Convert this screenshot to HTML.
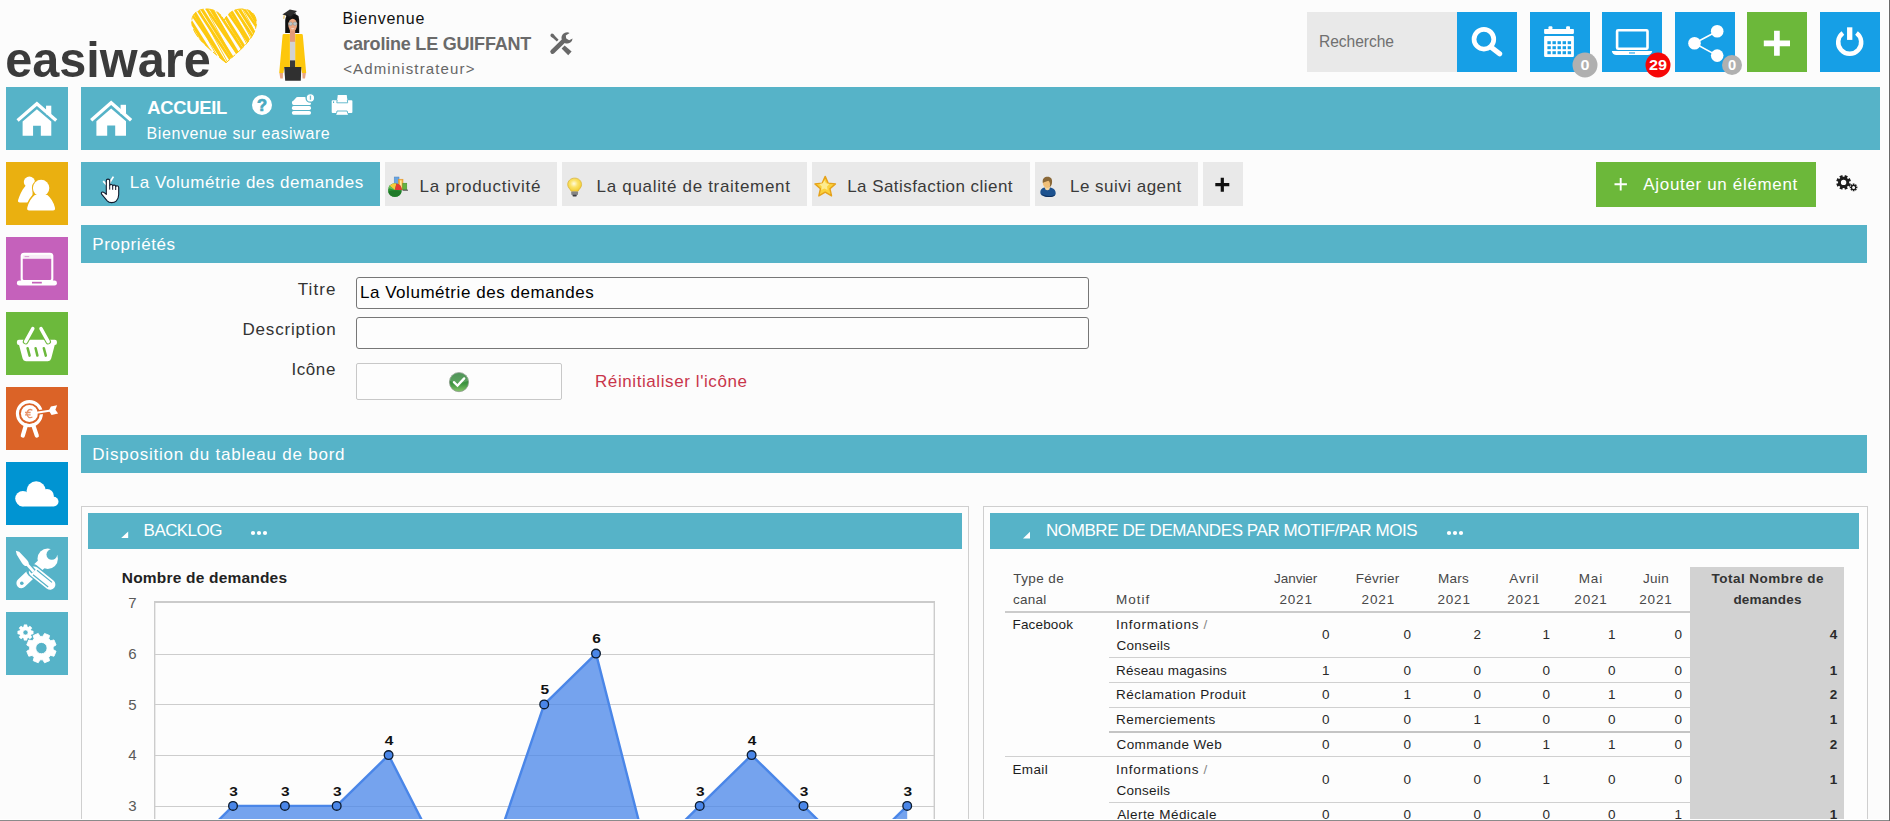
<!DOCTYPE html>
<html lang="fr">
<head>
<meta charset="utf-8">
<title>easiware - Accueil</title>
<style>
*{box-sizing:border-box;margin:0;padding:0}
html,body{width:1890px;height:821px;overflow:hidden;background:#fcfcfc}
body{position:relative;font-family:"Liberation Sans",sans-serif;color:#333;font-size:16px}
.a{position:absolute}
.t{position:absolute;white-space:nowrap;line-height:1}
svg{position:absolute;overflow:visible}
#frame{position:absolute;left:0;top:0;width:1890px;height:821px;pointer-events:none}
#frame i{position:absolute;display:block}

</style>
</head>
<body>
<!-- header -->
<svg class="a" style="left:0px;top:0px" width="330" height="87" viewBox="0 0 330 87" ><text x="5.2" y="76.5" font-family="Liberation Sans, sans-serif" font-weight="bold" font-size="49.6" fill="#3b3b3b" textLength="205.5" lengthAdjust="spacingAndGlyphs">easiware</text></svg>
<svg class="a" style="left:0px;top:0px" width="330" height="87" viewBox="0 0 330 87" ><defs><clipPath id="hc"><path d="M226 62.8 C213 52 195.5 39 192.3 26 C189.4 14 198 8.4 208 9 C216.5 9.6 221.4 14.4 224 20.4 C227.6 13 234 8.6 243 9 C253.4 9.6 258.4 18 255.6 28.4 C252 41.4 238 52 226 62.8 Z"/></clipPath></defs><g clip-path="url(#hc)" stroke="#fdc910" fill="none"><path d="M140.0 0 L184.0 70" stroke-width="3.0"/><path d="M144.6 0 L192.6 70" stroke-width="2.5"/><path d="M149.6 0 L191.6 70" stroke-width="3.3"/><path d="M153.9 0 L199.9 70" stroke-width="2.7"/><path d="M158.7 0 L202.7 70" stroke-width="3.0"/><path d="M163.3 0 L211.3 70" stroke-width="2.5"/><path d="M168.3 0 L210.3 70" stroke-width="3.3"/><path d="M172.6 0 L218.6 70" stroke-width="2.7"/><path d="M177.4 0 L221.4 70" stroke-width="3.0"/><path d="M182.0 0 L230.0 70" stroke-width="2.5"/><path d="M187.0 0 L229.0 70" stroke-width="3.3"/><path d="M191.3 0 L237.3 70" stroke-width="2.7"/><path d="M196.1 0 L240.1 70" stroke-width="3.0"/><path d="M200.7 0 L248.7 70" stroke-width="2.5"/><path d="M205.7 0 L247.7 70" stroke-width="3.3"/><path d="M210.0 0 L256.0 70" stroke-width="2.7"/><path d="M214.8 0 L258.8 70" stroke-width="3.0"/><path d="M219.4 0 L267.4 70" stroke-width="2.5"/><path d="M224.4 0 L266.4 70" stroke-width="3.3"/><path d="M228.7 0 L274.7 70" stroke-width="2.7"/><path d="M233.5 0 L277.5 70" stroke-width="3.0"/><path d="M238.1 0 L286.1 70" stroke-width="2.5"/><path d="M243.1 0 L285.1 70" stroke-width="3.3"/><path d="M247.4 0 L293.4 70" stroke-width="2.7"/><path d="M252.2 0 L296.2 70" stroke-width="3.0"/><path d="M256.8 0 L304.8 70" stroke-width="2.5"/><path d="M261.8 0 L303.8 70" stroke-width="3.3"/><path d="M266.1 0 L312.1 70" stroke-width="2.7"/><path d="M270.9 0 L314.9 70" stroke-width="3.0"/><path d="M275.5 0 L323.5 70" stroke-width="2.5"/><path d="M280.5 0 L322.5 70" stroke-width="3.3"/><path d="M284.8 0 L330.8 70" stroke-width="2.7"/><path d="M289.6 0 L333.6 70" stroke-width="3.0"/><path d="M294.2 0 L342.2 70" stroke-width="2.5"/><path d="M299.2 0 L341.2 70" stroke-width="3.3"/><path d="M150.0 0 L188.0 70" stroke-width="0.9"/><path d="M157.3 0 L195.3 70" stroke-width="0.9"/><path d="M164.6 0 L202.6 70" stroke-width="0.9"/><path d="M171.9 0 L209.9 70" stroke-width="0.9"/><path d="M179.2 0 L217.2 70" stroke-width="0.9"/><path d="M186.5 0 L224.5 70" stroke-width="0.9"/><path d="M193.8 0 L231.8 70" stroke-width="0.9"/><path d="M201.1 0 L239.1 70" stroke-width="0.9"/><path d="M208.4 0 L246.4 70" stroke-width="0.9"/><path d="M215.7 0 L253.7 70" stroke-width="0.9"/><path d="M223.0 0 L261.0 70" stroke-width="0.9"/><path d="M230.3 0 L268.3 70" stroke-width="0.9"/><path d="M237.6 0 L275.6 70" stroke-width="0.9"/><path d="M244.9 0 L282.9 70" stroke-width="0.9"/><path d="M252.2 0 L290.2 70" stroke-width="0.9"/><path d="M259.5 0 L297.5 70" stroke-width="0.9"/><path d="M266.8 0 L304.8 70" stroke-width="0.9"/><path d="M274.1 0 L312.1 70" stroke-width="0.9"/><path d="M281.4 0 L319.4 70" stroke-width="0.9"/><path d="M288.7 0 L326.7 70" stroke-width="0.9"/><path d="M296.0 0 L334.0 70" stroke-width="0.9"/></g><path d="M226 62.8 C213 52 195.5 39 192.3 26 C189.4 14 198 8.4 208 9 C216.5 9.6 221.4 14.4 224 20.4 C227.6 13 234 8.6 243 9 C253.4 9.6 258.4 18 255.6 28.4 C252 41.4 238 52 226 62.8 Z" fill="none" stroke="#fdc910" stroke-width="1.0" stroke-dasharray="9 3 5 2"/></svg>
<svg class="a" style="left:0px;top:0px" width="330" height="87" viewBox="0 0 330 87" ><path d="M285.2 33 V21 C285.2 15.4 288.6 13.6 292.3 13.6 C296 13.6 299.2 15.6 299.2 21 V33 Z" fill="#121212"/><rect x="289.9" y="29" width="5.3" height="13" fill="#e39a78"/><ellipse cx="292.7" cy="25" rx="4.4" ry="6.2" fill="#eaa581"/><path d="M287.6 22 C288.4 17.4 292 16.4 294.6 17.2 C296.4 17.8 297.6 19.4 297.8 21.6 L298.6 16 L292 13.6 L286.4 16.4 Z" fill="#121212"/><ellipse cx="290.5" cy="23.7" rx="2" ry="1.7" fill="#b9c6c8" stroke="#8a8f8c" stroke-width=".5"/><ellipse cx="295" cy="23.7" rx="2" ry="1.7" fill="#b9c6c8" stroke="#8a8f8c" stroke-width=".5"/><path d="M290.8 28.4 Q292.7 30 294.6 28.4 Z" fill="#fff"/><path d="M282.4 14.4 L289.8 9.4 L297 11 L290.7 16.8 Z" fill="#2c2c2c"/><path d="M285.8 15.4 L290.7 18.4 L295.6 14 L295.6 12.4 L290.7 16.8 L285.8 14.2 Z" fill="#1a1a1a"/><path d="M284.2 15.2 L283.8 18.8" stroke="#e2b13a" stroke-width="1" fill="none"/><rect x="289.9" y="41.8" width="5.3" height="19" fill="#d2d2d2"/><rect x="289.9" y="60.4" width="5.5" height="8" fill="#3a3a3a"/><path d="M282.6 35 Q282.6 34 284 34 L289.9 34 L289.9 67 L284.4 67 L283.4 73 L279.2 73 Z" fill="#fdc70c"/><path d="M302.8 35 Q302.8 34 301.4 34 L295.2 34 L295.2 67 L301 67 L302 73 L306.2 73 Z" fill="#fdc70c"/><path d="M279.4 73 H283 L282.8 78.5 H280.3 Z" fill="#eaa581"/><path d="M302.3 73 H305.9 L305 78.5 H302.6 Z" fill="#eaa581"/><path d="M284.2 67 H301.3 L300.8 80.8 H285.2 Z" fill="#303030"/></svg>
<div class="t" style="top:11px;font-size:16px;color:#111;letter-spacing:0.763px;left:342.59px;">Bienvenue</div>
<div class="t" style="top:35px;font-size:18px;color:#6a6a6a;font-weight:bold;letter-spacing:-0.207px;left:343.2px;">caroline LE GUIFFANT</div>
<div class="t" style="top:61px;font-size:15px;color:#666;letter-spacing:1.137px;left:343.16px;">&lt;Administrateur&gt;</div>
<svg class="a" style="left:543px;top:26px" width="36" height="36" viewBox="0 0 36 36" ><path d="M9.6 25.6 L21.4 14.2" stroke="#686868" stroke-width="4.6" stroke-linecap="round" fill="none"/><path d="M26.6 7 A5.6 5.6 0 1 0 29.6 12.4 L26.2 14.2 L23.2 12.6 L22.8 9.6 Z" fill="#686868"/><path d="M7.6 8.4 Q8.6 7 10.4 8 L12.2 10.2 L15.6 13.8 L13.8 15.6 L10.2 12.2 L8 10.8 Q7 9.8 7.6 8.4 Z" fill="#686868"/><path d="M21.6 19.4 L28.6 25.6 L25.2 29.2 L18.6 22.6 Z" fill="#686868"/></svg>
<div class="a" style="left:1307px;top:12px;width:150px;height:60px;background:#e9e9e9"></div>
<div class="t" style="top:34px;font-size:15.6px;color:#707070;letter-spacing:-0.034px;left:1318.92px;">Recherche</div>
<div class="a" style="left:1457px;top:12px;width:60px;height:60px;background:#169fe6"></div>
<div class="a" style="left:1530px;top:12px;width:60px;height:60px;background:#169fe6"></div>
<div class="a" style="left:1602px;top:12px;width:60px;height:60px;background:#169fe6"></div>
<div class="a" style="left:1675px;top:12px;width:60px;height:60px;background:#169fe6"></div>
<div class="a" style="left:1820px;top:12px;width:60px;height:60px;background:#169fe6"></div>
<div class="a" style="left:1747px;top:12px;width:60px;height:60px;background:#6cb83a"></div>
<svg class="a" style="left:1457px;top:12px" width="60" height="60" viewBox="0 0 60 60" ><circle cx="26.9" cy="27.2" r="9.85" fill="none" stroke="#fff" stroke-width="4.7"/><path d="M34.2 35.2 L42.6 41.8" stroke="#fff" stroke-width="5.2" stroke-linecap="round"/></svg>
<svg class="a" style="left:1530px;top:12px" width="60" height="60" viewBox="0 0 60 60" ><rect x="18.5" y="14.2" width="3.9" height="4" rx="1" fill="#fff"/><rect x="36.1" y="14.2" width="3.9" height="4" rx="1" fill="#fff"/><rect x="14.1" y="16.9" width="29.8" height="5" rx=".8" fill="#fff"/><rect x="14.1" y="24.1" width="29.8" height="20.8" rx=".8" fill="#fff"/><rect x="17.40" y="29.2" width="3.4" height="3.0" fill="#169fe6"/><rect x="22.47" y="29.2" width="3.4" height="3.0" fill="#169fe6"/><rect x="27.54" y="29.2" width="3.4" height="3.0" fill="#169fe6"/><rect x="32.61" y="29.2" width="3.4" height="3.0" fill="#169fe6"/><rect x="37.68" y="29.2" width="3.4" height="3.0" fill="#169fe6"/><rect x="17.40" y="34.2" width="3.4" height="3.0" fill="#169fe6"/><rect x="22.47" y="34.2" width="3.4" height="3.0" fill="#169fe6"/><rect x="27.54" y="34.2" width="3.4" height="3.0" fill="#169fe6"/><rect x="32.61" y="34.2" width="3.4" height="3.0" fill="#169fe6"/><rect x="37.68" y="34.2" width="3.4" height="3.0" fill="#169fe6"/><rect x="17.40" y="39.2" width="3.4" height="3.0" fill="#169fe6"/><rect x="22.47" y="39.2" width="3.4" height="3.0" fill="#169fe6"/><rect x="27.54" y="39.2" width="3.4" height="3.0" fill="#169fe6"/><rect x="32.61" y="39.2" width="3.4" height="3.0" fill="#169fe6"/><rect x="37.68" y="39.2" width="3.4" height="3.0" fill="#169fe6"/></svg>
<svg class="a" style="left:1602px;top:12px" width="60" height="60" viewBox="0 0 60 60" ><rect x="15.1" y="18.2" width="30.4" height="18.6" rx="1" fill="none" stroke="#fff" stroke-width="2.6"/><path d="M9.8 39 H50.2 Q49.4 42.9 45.6 42.9 H14.4 Q10.6 42.9 9.8 39 Z" fill="#fff"/><rect x="27" y="40.3" width="6" height="1.3" fill="#169fe6" opacity=".8"/></svg>
<svg class="a" style="left:1675px;top:12px" width="60" height="60" viewBox="0 0 60 60" ><path d="M42.2 19.3 L19.5 31.3 L42.2 43.6" fill="none" stroke="#fff" stroke-width="1.6"/><circle cx="19.5" cy="31.3" r="6.3" fill="#fff"/><circle cx="42.2" cy="19.3" r="6.3" fill="#fff"/><circle cx="42.2" cy="43.6" r="6.3" fill="#fff"/></svg>
<svg class="a" style="left:1747px;top:12px" width="60" height="60" viewBox="0 0 60 60" ><path d="M29.9 18.8 V43.8 M16.8 31.3 H43" stroke="#fff" stroke-width="5.7" fill="none"/></svg>
<svg class="a" style="left:1820px;top:12px" width="60" height="60" viewBox="0 0 60 60" ><path d="M22.9 21 A11.5 11.5 0 1 0 36.5 21" fill="none" stroke="#fff" stroke-width="4.5"/><path d="M29.7 15.3 V27.9" stroke="#fff" stroke-width="5.3"/></svg>
<svg class="a" style="left:1571.5px;top:51.5px" width="26" height="26" viewBox="-13 -13 26 26" ><circle cx="0" cy="0" r="12.5" fill="#b0b0b0"/><text x="-4.5" y="5.1" font-family="Liberation Sans, sans-serif" font-weight="bold" font-size="14.4" fill="#fff" textLength="9.0" lengthAdjust="spacingAndGlyphs">0</text></svg>
<svg class="a" style="left:1644.5px;top:51.5px" width="26" height="26" viewBox="-13 -13 26 26" ><circle cx="0" cy="0" r="12.5" fill="#f60606"/><text x="-9.0" y="5.1" font-family="Liberation Sans, sans-serif" font-weight="bold" font-size="14.4" fill="#fff" textLength="18.0" lengthAdjust="spacingAndGlyphs">29</text></svg>
<svg class="a" style="left:1719px;top:51.900000000000006px" width="26" height="26" viewBox="-13 -13 26 26" ><circle cx="0" cy="0" r="10.0" fill="#b0b0b0"/><text x="-4.1" y="5.0" font-family="Liberation Sans, sans-serif" font-weight="bold" font-size="14" fill="#fff" textLength="8.2" lengthAdjust="spacingAndGlyphs">0</text></svg>
<!-- sidebar -->
<div class="a" style="left:6px;top:87px;width:62px;height:63px;background:#56b3c8"></div>
<div class="a" style="left:6px;top:162px;width:62px;height:63px;background:#eab010"></div>
<div class="a" style="left:6px;top:237px;width:62px;height:63px;background:#c561bb"></div>
<div class="a" style="left:6px;top:312px;width:62px;height:63px;background:#6cb93c"></div>
<div class="a" style="left:6px;top:387px;width:62px;height:63px;background:#db6327"></div>
<div class="a" style="left:6px;top:462px;width:62px;height:63px;background:#0094d2"></div>
<div class="a" style="left:6px;top:537px;width:62px;height:63px;background:#56b3c8"></div>
<div class="a" style="left:6px;top:612px;width:62px;height:63px;background:#56b3c8"></div>
<svg class="a" style="left:16.2px;top:101.8px" width="41.8" height="34.4" viewBox="0 0 42.3 35.5" ><path d="M1.2 19.2 L21.15 1.8 L41.1 19.2" fill="none" stroke="#fff" stroke-width="3.4" stroke-linejoin="miter"/><rect x="30.6" y="3.8" width="5.4" height="9" fill="#fff"/><path d="M6.4 20.2 L21.15 7.4 L36 20.2 V34.8 H25.2 V24.4 H17.2 V34.8 H6.4 Z" fill="#fff"/></svg>
<svg class="a" style="left:6px;top:162px" width="62" height="63" viewBox="0 0 62 63" ><ellipse cx="23.4" cy="20" rx="5.6" ry="5.4" fill="#fff"/><path d="M19.4 24 H27 L26 40.4 H14 Q11.2 40.4 12.2 37.8 C13.4 34 15.4 28.6 19.4 24 Z" fill="#fff"/><ellipse cx="35.1" cy="26.1" rx="8.3" ry="8.5" fill="#fff" stroke="#eab010" stroke-width="1.8"/><path d="M28.4 32.4 H41.8 C45.6 35.4 48.4 40.6 49.6 45.4 Q50.4 49.2 47 49.2 H23.2 Q19.8 49.2 20.6 45.4 C21.8 40.6 24.6 35.4 28.4 32.4 Z" fill="#fff" stroke="#eab010" stroke-width="1.4"/><ellipse cx="35.1" cy="26.1" rx="8.2" ry="8.4" fill="#fff"/></svg>
<svg class="a" style="left:6px;top:237px" width="62" height="63" viewBox="0 0 62 63" ><rect x="15.7" y="16.7" width="30.6" height="27.4" rx="2.4" fill="none" stroke="#fff" stroke-width="2.1"/><rect x="16" y="17" width="30" height="4.8" fill="#fff" opacity=".88"/><path d="M18.6 19.6 H23.2" stroke="#c561bb" stroke-width="1" opacity=".6"/><rect x="10.9" y="43.4" width="40" height="5.2" rx="2.4" fill="#fff"/><rect x="26" y="44.8" width="9.8" height="1.7" fill="#c561bb"/></svg>
<svg class="a" style="left:6px;top:312px" width="62" height="63" viewBox="0 0 62 63" ><rect x="10.9" y="27.7" width="40" height="5.4" rx="2" fill="#fff"/><path d="M12.8 32 H49 L45.2 46.6 Q44.6 49.2 41.8 49.2 H20 Q17.2 49.2 16.6 46.6 Z" fill="#fff"/><path d="M19.6 29.6 L26.8 16.6" stroke="#6cb93c" stroke-width="5.6" stroke-linecap="round"/><path d="M42.2 29.6 L35 16.6" stroke="#6cb93c" stroke-width="5.6" stroke-linecap="round"/><path d="M19.6 29.6 L26.8 16.6" stroke="#fff" stroke-width="3.5" stroke-linecap="round"/><path d="M42.2 29.6 L35 16.6" stroke="#fff" stroke-width="3.5" stroke-linecap="round"/><path d="M21.6 36.2 L23.6 43.6 M29.6 36.2 L31.4 43.6 M37.8 36.2 L39.8 43.6" stroke="#6cb93c" stroke-width="2.5" stroke-linecap="round"/></svg>
<svg class="a" style="left:6px;top:387px" width="62" height="63" viewBox="0 0 62 63" ><circle cx="23.4" cy="26.6" r="12" fill="none" stroke="#fff" stroke-width="3.1"/><circle cx="23.4" cy="26.6" r="8.5" fill="#fff"/><path d="M26.4 23.2 Q22 20.8 20.8 26.6 Q22 32.4 26.4 30 M19 25.5 H24.6 M19 27.8 H24.6" fill="none" stroke="#db6327" stroke-width="1.3" opacity=".7"/><path d="M31.6 25.5 L44 23.7" stroke="#db6327" stroke-width="4.4"/><path d="M30.4 25.7 L45 23.5" stroke="#fff" stroke-width="1.9"/><path d="M43.2 22.8 L44.9 19.4 L51.1 18.3 L49.4 22.8 L52.1 26.5 L45.6 27.9 L43.2 24.3 Z" fill="#fff"/><path d="M19.8 38.6 L16.8 48.6 M27.4 38.6 L30.8 48.6" stroke="#fff" stroke-width="4.2" stroke-linecap="round"/></svg>
<svg class="a" style="left:6px;top:462px" width="62" height="63" viewBox="0 0 62 63" ><circle cx="16.9" cy="36.6" r="7.7" fill="#fff"/><circle cx="30.2" cy="29" r="9.7" fill="#fff"/><circle cx="41" cy="33.8" r="6.8" fill="#fff"/><circle cx="47.6" cy="39.6" r="4.9" fill="#fff"/><rect x="12" y="34" width="38" height="10.5" rx="4.6" fill="#fff"/></svg>
<svg class="a" style="left:6px;top:537px" width="62" height="63" viewBox="0 0 62 63" ><path d="M15.4 46.2 L36 26.6" stroke="#fff" stroke-width="10" stroke-linecap="round"/><circle cx="15.8" cy="46.2" r="1.8" fill="#56b3c8"/><circle cx="41.7" cy="21.7" r="10.2" fill="#fff"/><circle cx="45.8" cy="17.4" r="5.3" fill="#56b3c8"/><path d="M45.8 17.4 L56 7" stroke="#56b3c8" stroke-width="8.6"/><path d="M26.6 33.4 L45.6 48.8" stroke="#56b3c8" stroke-width="13" stroke-linecap="round"/><path d="M28 34.6 L44.2 47.6" stroke="#fff" stroke-width="10.4" stroke-linecap="round"/><path d="M31 33.2 L46 45.4 M27 37.8 L42.2 50" stroke="#56b3c8" stroke-width="1.2"/><path d="M27.6 34.6 L20 26" stroke="#56b3c8" stroke-width="5.6"/><path d="M27.6 34.6 L20 26" stroke="#fff" stroke-width="2.8"/><path d="M9.8 13.8 L13.2 14.8 L19.6 21.6 Q23.4 25.4 22.6 27 L20.4 29 Q18.8 29.8 15.6 25.4 L10.8 17.8 Z" fill="#fff"/></svg>
<svg class="a" style="left:6px;top:612px" width="62" height="63" viewBox="0 0 62 63" ><path d="M47.12 37.49 L50.06 39.26 L48.00 44.24 L44.67 43.41 L42.71 45.37 L43.54 48.70 L38.56 50.76 L36.79 47.82 L34.01 47.82 L32.24 50.76 L27.26 48.70 L28.09 45.37 L26.13 43.41 L22.80 44.24 L20.74 39.26 L23.68 37.49 L23.68 34.71 L20.74 32.94 L22.80 27.96 L26.13 28.79 L28.09 26.83 L27.26 23.50 L32.24 21.44 L34.01 24.38 L36.79 24.38 L38.56 21.44 L43.54 23.50 L42.71 26.83 L44.67 28.79 L48.00 27.96 L50.06 32.94 L47.12 34.71 Z M41.10 36.10 A5.7 5.7 0 1 0 29.70 36.10 A5.7 5.7 0 1 0 41.10 36.10 Z" fill="#fff" fill-rule="evenodd" stroke="#fff" stroke-width=".9" stroke-linejoin="round"/><path d="M25.27 18.87 L27.17 19.10 L27.17 21.90 L25.27 22.13 L24.73 23.43 L25.92 24.93 L23.93 26.92 L22.43 25.73 L21.13 26.27 L20.90 28.17 L18.10 28.17 L17.87 26.27 L16.57 25.73 L15.07 26.92 L13.08 24.93 L14.27 23.43 L13.73 22.13 L11.83 21.90 L11.83 19.10 L13.73 18.87 L14.27 17.57 L13.08 16.07 L15.07 14.08 L16.57 15.27 L17.87 14.73 L18.10 12.83 L20.90 12.83 L21.13 14.73 L22.43 15.27 L23.93 14.08 L25.92 16.07 L24.73 17.57 Z M22.00 20.50 A2.5 2.5 0 1 0 17.00 20.50 A2.5 2.5 0 1 0 22.00 20.50 Z" fill="#fff" fill-rule="evenodd" stroke="#fff" stroke-width=".6" stroke-linejoin="round"/></svg>
<!-- titlebar -->
<div class="a" style="left:81px;top:87px;width:1799px;height:63px;background:#56b3c8"></div>
<svg class="a" style="left:89.8px;top:101px" width="42.3" height="35.5" viewBox="0 0 42.3 35.5" ><path d="M1.2 19.2 L21.15 1.8 L41.1 19.2" fill="none" stroke="#fff" stroke-width="3.4" stroke-linejoin="miter"/><rect x="30.6" y="3.8" width="5.4" height="9" fill="#fff"/><path d="M6.4 20.2 L21.15 7.4 L36 20.2 V34.8 H25.2 V24.4 H17.2 V34.8 H6.4 Z" fill="#fff"/></svg>
<div class="t" style="top:99px;font-size:18.4px;color:#fff;font-weight:bold;letter-spacing:-0.259px;left:147.14px;">ACCUEIL</div>
<div class="t" style="top:126px;font-size:16px;color:#fff;letter-spacing:0.593px;left:146.49px;">Bienvenue sur easiware</div>
<svg class="a" style="left:252px;top:95px" width="20" height="20" viewBox="0 0 20 20" ><circle cx="10" cy="10" r="10" fill="#fff"/></svg>
<div class="t" style="top:97px;font-size:16.5px;color:#4aa9c0;font-weight:bold;left:-38.00px;width:600px;text-align:center;-webkit-text-stroke:0.7px #4aa9c0;">?</div>
<svg class="a" style="left:285px;top:90px" width="34" height="30" viewBox="285 90 34 30" ><path d="M291.9 102.6 Q291.9 100.8 293.6 100.4 L295.6 98.2 Q296.4 97.1 297.8 97.1 H304.4 Q305.8 97.1 306.8 98.2 L309.6 101.4 Q311 102.2 311 103.4 Q311 105 309.4 105 H293.4 Q291.9 105 291.9 102.6 Z" fill="#fff"/><rect x="291.9" y="106" width="19.1" height="3.9" rx="1.7" fill="#fff"/><rect x="291.9" y="110.9" width="19.1" height="3.9" rx="1.7" fill="#fff"/><circle cx="310.4" cy="97.9" r="4.3" fill="#fff" stroke="#56b3c8" stroke-width="1.3"/><rect x="309.8" y="95.6" width="1.3" height="4.2" fill="#56b3c8" opacity=".8"/></svg>
<svg class="a" style="left:325px;top:90px" width="34" height="30" viewBox="325 90 34 30" ><rect x="331.7" y="100.2" width="20.7" height="12.8" rx=".9" fill="#fff"/><path d="M337.8 95 H346.7 L347.7 102.8 H336.8 Z" fill="#fff" stroke="#56b3c8" stroke-width=".9"/><path d="M337.8 95 H346.7 L347.3 100 H337.2 Z" fill="#fff"/><path d="M337 111 H347.2 L348 114.8 H336.2 Z" fill="#fff" stroke="#56b3c8" stroke-width=".9"/><path d="M336.6 113.4 H347.6 L348 114.8 H336.2 Z" fill="#fff"/><rect x="333" y="101.4" width="1.1" height="1.6" fill="#56b3c8"/></svg>
<!-- tabs -->
<div class="a" style="left:81px;top:162px;width:299px;height:44px;background:#56b3c8"></div>
<div class="a" style="left:385px;top:162px;width:172px;height:44px;background:#e9e9e9"></div>
<div class="a" style="left:562px;top:162px;width:245px;height:44px;background:#e9e9e9"></div>
<div class="a" style="left:812px;top:162px;width:218px;height:44px;background:#e9e9e9"></div>
<div class="a" style="left:1035px;top:162px;width:163px;height:44px;background:#e9e9e9"></div>
<div class="a" style="left:1203px;top:162px;width:40px;height:44px;background:#e9e9e9"></div>
<div class="t" style="top:174px;font-size:17px;color:#fff;letter-spacing:0.529px;left:129.81px;">La Volumétrie des demandes</div>
<div class="t" style="top:178px;font-size:17px;color:#3a3a3a;letter-spacing:0.727px;left:419.61px;">La productivité</div>
<div class="t" style="top:178px;font-size:17px;color:#3a3a3a;letter-spacing:0.68px;left:596.61px;">La qualité de traitement</div>
<div class="t" style="top:178px;font-size:17px;color:#3a3a3a;letter-spacing:0.447px;left:847.21px;">La Satisfaction client</div>
<div class="t" style="top:178px;font-size:17px;color:#3a3a3a;letter-spacing:0.486px;left:1070.01px;">Le suivi agent</div>
<svg class="a" style="left:95px;top:170px" width="30" height="36" viewBox="95 170 30 36" ><path d="M103.2 181.2 L107.6 186 L113.4 176.6" fill="none" stroke="#fff" stroke-width="1.8"/><path d="M106.3 180.7 Q106.3 179.1 108 179.1 Q109.7 179.1 109.7 180.7 V185.4 Q109.9 184.5 111.2 184.5 Q112.6 184.5 112.7 185.8 Q113 185 114.2 185 Q115.6 185.1 115.7 186.4 Q116 185.8 117.1 185.8 Q118.7 185.9 118.7 187.6 V194.6 Q118.7 198.2 116.4 200.8 Q114.6 202.6 111.6 202.6 Q108.8 202.6 107.2 200.8 L101.6 194.2 Q100.8 193 101.9 192.2 Q103 191.6 104.2 192.6 L106.3 194.4 Z" fill="#fff" stroke="#10182a" stroke-width="1.1" stroke-linejoin="round"/><path d="M109.7 185.4 V189.6 M112.7 185.8 V189.8 M115.7 186.4 V190" stroke="#10182a" stroke-width="1" fill="none"/></svg>
<svg class="a" style="left:384px;top:170px" width="30" height="30" viewBox="384 170 30 30" ><rect x="394.2" y="177" width="4.8" height="8" fill="#6aa5e0" stroke="#4d86c4" stroke-width=".5"/><rect x="398.4" y="179.2" width="4.6" height="10.6" fill="#f4b23c" stroke="#e0902a" stroke-width=".5"/><rect x="400" y="180.4" width="1.6" height="8" fill="#fde9a0"/><rect x="402.8" y="183.2" width="4" height="6.6" fill="#63b33f" stroke="#3f8f2c" stroke-width=".5"/><path d="M402.6 190.2 H408" stroke="#555" stroke-width="1.1"/><circle cx="394.9" cy="190.1" r="6.9" fill="#2f9236"/><path d="M388.2 191.6 A6.9 6.9 0 0 0 401.6 191.6 Q395 189 388.2 191.6 Z" fill="#1f7a28"/><path d="M394.9 190.1 L389.6 185.7 A6.9 6.9 0 0 1 396.4 183.4 Z" fill="#f7c93a"/><path d="M394.9 190.1 L396.4 183.4 A6.9 6.9 0 0 1 401.8 190.1 Z" fill="#e53a34"/><path d="M388.4 188 A6.9 6.9 0 0 1 389.6 185.7 L394.9 190.1 Z" fill="#6cc05a"/></svg>
<svg class="a" style="left:567.1px;top:176.7px" width="16" height="20.4" viewBox="0 0 18 22" ><defs><radialGradient id="gb" cx=".45" cy=".42" r=".6"><stop offset="0" stop-color="#fffbe0"/><stop offset=".45" stop-color="#fbe36a"/><stop offset="1" stop-color="#f2cc2e"/></radialGradient></defs><path d="M8.6 0.8 C3.8 0.8 0.8 4.2 0.8 8 C0.8 11.4 3.6 13 4.8 15.6 H12.4 C13.6 13 16.4 11.4 16.4 8 C16.4 4.2 13.4 0.8 8.6 0.8 Z" fill="url(#gb)" stroke="#d9b43a" stroke-width=".9"/><rect x="4.8" y="15.8" width="7.6" height="4" rx=".8" fill="#858585"/><rect x="6.2" y="19.4" width="4.8" height="2" rx=".9" fill="#3c3c44"/></svg>
<svg class="a" style="left:814px;top:175px" width="23" height="23" viewBox="0 0 23 23" ><polygon points="11.20,1.40 14.14,8.15 21.47,8.86 15.96,13.75 17.55,20.94 11.20,17.20 4.85,20.94 6.44,13.75 0.93,8.86 8.26,8.15" fill="#fbd23c" stroke="#e5a21c" stroke-width="1.4" stroke-linejoin="round"/><polygon points="10.40,5.20 12.05,8.33 15.54,8.93 13.06,11.47 13.57,14.97 10.40,13.40 7.23,14.97 7.74,11.47 5.26,8.93 8.75,8.33" fill="#fdeb90"/></svg>
<svg class="a" style="left:1034px;top:170px" width="30" height="30" viewBox="1034 170 30 30" ><path d="M1040.3 192 C1040.6 188.6 1043.4 187.2 1047.4 187.2 C1051.6 187.2 1055.4 188.8 1055.7 193 C1055.8 195.6 1053.6 197 1048.6 197 C1044 197 1040 195.6 1040.3 192 Z" fill="#1d528f"/><path d="M1041.4 193.6 C1043.6 196.2 1051.6 196.8 1055.2 194.4 C1054.6 196.4 1052 197 1048.6 197 C1045 197 1042.2 196 1041.4 193.6 Z" fill="#0f2f5c"/><path d="M1044.4 186.6 H1050.2 L1049.4 189.6 Q1047.4 191 1045.4 189.6 Z" fill="#f3d6a4"/><ellipse cx="1047.2" cy="182.6" rx="4.4" ry="5.3" fill="#f0bf78"/><path d="M1042.9 183 C1042 178.4 1044.6 176.8 1047.6 176.8 C1050.8 176.8 1052.6 179 1052 183 C1051.6 185.4 1050.6 186.6 1049.8 187 C1050.4 184.4 1050 182 1048.4 180.8 C1046.6 181.6 1044.4 181.6 1042.9 183 Z" fill="#8a6838"/></svg>
<svg class="a" style="left:1203px;top:162px" width="40" height="44" viewBox="1203 162 40 44" ><path d="M1222.3 177.7 V191.7 M1215.3 184.7 H1229.3" stroke="#111" stroke-width="3.2" fill="none"/></svg>
<div class="a" style="left:1596px;top:162px;width:220px;height:45px;background:#6cb83a"></div>
<svg class="a" style="left:1596px;top:162px" width="220" height="45" viewBox="1596 162 220 45" ><path d="M1620.7 178 V190.4 M1614.5 184.2 H1626.9" stroke="#fff" stroke-width="1.9" fill="none"/></svg>
<div class="t" style="top:176px;font-size:17px;color:#fff;letter-spacing:0.662px;left:1643.37px;">Ajouter un élément</div>
<svg class="a" style="left:1830px;top:170px" width="30" height="24" viewBox="1830 170 30 24" ><path d="M1849.14 183.23 L1850.98 183.72 L1849.75 186.69 L1848.10 185.73 L1846.93 186.90 L1847.89 188.55 L1844.92 189.78 L1844.43 187.94 L1842.77 187.94 L1842.28 189.78 L1839.31 188.55 L1840.27 186.90 L1839.10 185.73 L1837.45 186.69 L1836.22 183.72 L1838.06 183.23 L1838.06 181.57 L1836.22 181.08 L1837.45 178.11 L1839.10 179.07 L1840.27 177.90 L1839.31 176.25 L1842.28 175.02 L1842.77 176.86 L1844.43 176.86 L1844.92 175.02 L1847.89 176.25 L1846.93 177.90 L1848.10 179.07 L1849.75 178.11 L1850.98 181.08 L1849.14 181.57 Z M1846.30 182.40 A2.7 2.7 0 1 0 1840.90 182.40 A2.7 2.7 0 1 0 1846.30 182.40 Z" fill="#1d1d1d" fill-rule="evenodd"/><path d="M1856.41 186.70 L1857.39 186.49 L1857.39 188.31 L1856.41 188.10 L1856.08 188.90 L1856.93 189.44 L1855.64 190.73 L1855.10 189.88 L1854.30 190.21 L1854.51 191.19 L1852.69 191.19 L1852.90 190.21 L1852.10 189.88 L1851.56 190.73 L1850.27 189.44 L1851.12 188.90 L1850.79 188.10 L1849.81 188.31 L1849.81 186.49 L1850.79 186.70 L1851.12 185.90 L1850.27 185.36 L1851.56 184.07 L1852.10 184.92 L1852.90 184.59 L1852.69 183.61 L1854.51 183.61 L1854.30 184.59 L1855.10 184.92 L1855.64 184.07 L1856.93 185.36 L1856.08 185.90 Z M1855.10 187.40 A1.5 1.5 0 1 0 1852.10 187.40 A1.5 1.5 0 1 0 1855.10 187.40 Z" fill="#1d1d1d" fill-rule="evenodd"/></svg>
<!-- props -->
<div class="a" style="left:81px;top:225px;width:1786px;height:38px;background:#56b3c8"></div>
<div class="t" style="top:236px;font-size:17px;color:#fff;letter-spacing:0.581px;left:92.31px;">Propriétés</div>
<div class="a" style="left:81px;top:435px;width:1786px;height:38px;background:#56b3c8"></div>
<div class="t" style="top:446px;font-size:17px;color:#fff;letter-spacing:0.78px;left:92.31px;">Disposition du tableau de bord</div>
<div class="t" style="top:281px;font-size:17px;color:#333;letter-spacing:1.042px;left:297.82px;">Titre</div>
<div class="t" style="top:321px;font-size:17px;color:#333;letter-spacing:0.816px;left:242.51px;">Description</div>
<div class="t" style="top:361px;font-size:17px;color:#333;letter-spacing:0.559px;left:291.53px;">Icône</div>
<div class="a" style="left:356px;top:277px;width:733px;height:32px;border:1px solid #777;border-radius:3px;background:#fdfdfd"></div>
<div class="a" style="left:356px;top:317px;width:733px;height:32px;border:1px solid #777;border-radius:3px;background:#fdfdfd"></div>
<div class="t" style="top:284px;font-size:17px;color:#000;letter-spacing:0.541px;left:359.91px;">La Volumétrie des demandes</div>
<div class="a" style="left:356px;top:363px;width:206px;height:37px;border:1px solid #c8c8c8;border-radius:2px;background:#fdfdfd"></div>
<svg class="a" style="left:448px;top:371px" width="22" height="22" viewBox="0 0 22 22" ><defs><linearGradient id="gk" x1="0" y1="0" x2="0" y2="1"><stop offset="0" stop-color="#2f7f3a"/><stop offset=".6" stop-color="#3f9640"/><stop offset="1" stop-color="#86c66a"/></linearGradient></defs><circle cx="11" cy="11.1" r="9.6" fill="url(#gk)" stroke="#8c9a8c" stroke-width=".8"/><path d="M1.8 10 A9.2 9.2 0 0 1 20.2 10 Q11 13.4 1.8 10 Z" fill="#fff" opacity=".16"/><path d="M5.9 11.2 L9.5 14.6 L16.2 7.4" fill="none" stroke="#fff" stroke-width="2.3" stroke-linecap="round" stroke-linejoin="miter"/></svg>
<div class="t" style="top:373px;font-size:17px;color:#c9354b;letter-spacing:0.585px;left:595.01px;">Réinitialiser l&#x27;icône</div>
<!-- panels -->
<div class="a" style="left:81px;top:506px;width:888px;height:330px;border:1px solid #cfcfcf;background:#fdfdfd"></div>
<div class="a" style="left:88px;top:513px;width:874px;height:36px;background:#56b3c8"></div>
<svg class="a" style="left:120px;top:530px" width="10" height="10" viewBox="120 530 10 10" ><path d="M128.2 531.4 V538 H121.2 Z" fill="#fff"/></svg>
<div class="t" style="top:522px;font-size:17px;color:#fff;letter-spacing:-0.572px;left:143.61px;">BACKLOG</div>
<svg class="a" style="left:250px;top:528.9px" width="20" height="8" viewBox="0 0 20 8" ><circle cx="3" cy="4" r="2.1" fill="#fff"/><circle cx="9" cy="4" r="2.1" fill="#fff"/><circle cx="15" cy="4" r="2.1" fill="#fff"/></svg>
<div class="a" style="left:983px;top:506px;width:885px;height:330px;border:1px solid #cfcfcf;background:#fdfdfd"></div>
<div class="a" style="left:990px;top:513px;width:869px;height:36px;background:#56b3c8"></div>
<svg class="a" style="left:1022px;top:530px" width="10" height="10" viewBox="1022 530 10 10" ><path d="M1030 531.8 V538.4 H1023 Z" fill="#fff"/></svg>
<div class="t" style="top:522px;font-size:17px;color:#fff;letter-spacing:-0.415px;left:1046.01px;">NOMBRE DE DEMANDES PAR MOTIF/PAR MOIS</div>
<svg class="a" style="left:1446px;top:528.9px" width="20" height="8" viewBox="0 0 20 8" ><circle cx="3" cy="4" r="2.1" fill="#fff"/><circle cx="9" cy="4" r="2.1" fill="#fff"/><circle cx="15" cy="4" r="2.1" fill="#fff"/></svg>
<div class="t" style="top:570px;font-size:15.5px;color:#222;font-weight:bold;letter-spacing:0.196px;left:121.76px;">Nombre de demandes</div>
<svg class="a" style="left:0;top:560px;overflow:hidden" width="975" height="261" viewBox="0 560 975 261"><path d="M154.5 654.5 H934.5" stroke="#cdcdcd" stroke-width="1" fill="none"/><path d="M154.5 704.5 H934.5" stroke="#cdcdcd" stroke-width="1" fill="none"/><path d="M154.5 755.5 H934.5" stroke="#cdcdcd" stroke-width="1" fill="none"/><path d="M154.5 806.5 H934.5" stroke="#cdcdcd" stroke-width="1" fill="none"/><path d="M154.7 601.6 V830 M934.3 601.6 V830" stroke="#cccccc" stroke-width="1.4" fill="none"/><path d="M154 602 H935" stroke="#cbcbcb" stroke-width="2" fill="none"/><path d="M181.1 857.2 L233.0 805.9 L284.9 805.9 L336.7 805.9 L388.6 755.1 L440.4 856.6 L492.3 856.6 L544.2 704.4 L596.0 653.6 L647.9 856.6 L699.7 805.9 L751.6 755.1 L803.5 805.9 L855.3 856.6 L907.2 805.9 L907.2 900 L181.1 900 Z" fill="#4a86e8" fill-opacity=".76"/><path d="M181.1 857.2 L233.0 805.9 L284.9 805.9 L336.7 805.9 L388.6 755.1 L440.4 856.6 L492.3 856.6 L544.2 704.4 L596.0 653.6 L647.9 856.6 L699.7 805.9 L751.6 755.1 L803.5 805.9 L855.3 856.6 L907.2 805.9" fill="none" stroke="#4a86e8" stroke-width="2.4" stroke-linejoin="round"/><circle cx="233.0" cy="805.9" r="4.35" fill="#4a86e8" stroke="#0c1c30" stroke-width="1.3"/><circle cx="284.9" cy="805.9" r="4.35" fill="#4a86e8" stroke="#0c1c30" stroke-width="1.3"/><circle cx="336.7" cy="805.9" r="4.35" fill="#4a86e8" stroke="#0c1c30" stroke-width="1.3"/><circle cx="388.6" cy="755.1" r="4.35" fill="#4a86e8" stroke="#0c1c30" stroke-width="1.3"/><circle cx="544.2" cy="704.4" r="4.35" fill="#4a86e8" stroke="#0c1c30" stroke-width="1.3"/><circle cx="596.0" cy="653.6" r="4.35" fill="#4a86e8" stroke="#0c1c30" stroke-width="1.3"/><circle cx="699.7" cy="805.9" r="4.35" fill="#4a86e8" stroke="#0c1c30" stroke-width="1.3"/><circle cx="751.6" cy="755.1" r="4.35" fill="#4a86e8" stroke="#0c1c30" stroke-width="1.3"/><circle cx="803.5" cy="805.9" r="4.35" fill="#4a86e8" stroke="#0c1c30" stroke-width="1.3"/><circle cx="907.2" cy="805.9" r="4.35" fill="#4a86e8" stroke="#0c1c30" stroke-width="1.3"/><g font-family="Liberation Sans, sans-serif" font-weight="bold" font-size="12.8" fill="#111"><text x="229.2" y="795.5" textLength="8.6" lengthAdjust="spacingAndGlyphs">3</text><text x="281.1" y="795.5" textLength="8.6" lengthAdjust="spacingAndGlyphs">3</text><text x="332.9" y="795.5" textLength="8.6" lengthAdjust="spacingAndGlyphs">3</text><text x="384.8" y="744.8" textLength="8.6" lengthAdjust="spacingAndGlyphs">4</text><text x="540.4" y="694.0" textLength="8.6" lengthAdjust="spacingAndGlyphs">5</text><text x="592.2" y="643.2" textLength="8.6" lengthAdjust="spacingAndGlyphs">6</text><text x="695.9" y="795.5" textLength="8.6" lengthAdjust="spacingAndGlyphs">3</text><text x="747.8" y="744.8" textLength="8.6" lengthAdjust="spacingAndGlyphs">4</text><text x="799.7" y="795.5" textLength="8.6" lengthAdjust="spacingAndGlyphs">3</text><text x="903.4" y="795.5" textLength="8.6" lengthAdjust="spacingAndGlyphs">3</text></g><g font-family="Liberation Sans, sans-serif" font-size="15" fill="#595959"><text x="132.5" y="608.1" text-anchor="middle">7</text><text x="132.5" y="658.9" text-anchor="middle">6</text><text x="132.5" y="709.6" text-anchor="middle">5</text><text x="132.5" y="760.4" text-anchor="middle">4</text><text x="132.5" y="811.1" text-anchor="middle">3</text></g></svg>
<div class="a" style="left:1690px;top:567px;width:154px;height:260px;background:#d2d2d2"></div>
<div class="t" style="top:572px;font-size:13.5px;color:#484848;letter-spacing:0.411px;left:1013.3px;">Type de</div>
<div class="t" style="top:593px;font-size:13.5px;color:#484848;letter-spacing:0.251px;left:1013.03px;">canal</div>
<div class="t" style="top:593px;font-size:13.5px;color:#484848;letter-spacing:0.958px;left:1116.09px;">Motif</div>
<div class="t" style="top:572px;font-size:13.5px;color:#484848;letter-spacing:-0.047px;left:1274.09px;">Janvier</div>
<div class="t" style="top:593px;font-size:13.5px;color:#484848;letter-spacing:0.835px;left:1279.42px;">2021</div>
<div class="t" style="top:572px;font-size:13.5px;color:#484848;letter-spacing:0.255px;left:1355.69px;">Février</div>
<div class="t" style="top:593px;font-size:13.5px;color:#484848;letter-spacing:0.835px;left:1361.62px;">2021</div>
<div class="t" style="top:572px;font-size:13.5px;color:#484848;letter-spacing:0.332px;left:1437.89px;">Mars</div>
<div class="t" style="top:593px;font-size:13.5px;color:#484848;letter-spacing:0.835px;left:1437.42px;">2021</div>
<div class="t" style="top:572px;font-size:13.5px;color:#484848;letter-spacing:0.781px;left:1509.37px;">Avril</div>
<div class="t" style="top:593px;font-size:13.5px;color:#484848;letter-spacing:0.835px;left:1507.22px;">2021</div>
<div class="t" style="top:572px;font-size:13.5px;color:#484848;letter-spacing:0.932px;left:1578.69px;">Mai</div>
<div class="t" style="top:593px;font-size:13.5px;color:#484848;letter-spacing:0.835px;left:1574.32px;">2021</div>
<div class="t" style="top:572px;font-size:13.5px;color:#484848;letter-spacing:0.307px;left:1642.99px;">Juin</div>
<div class="t" style="top:593px;font-size:13.5px;color:#484848;letter-spacing:0.835px;left:1639.22px;">2021</div>
<div class="t" style="top:572px;font-size:13.5px;color:#333;font-weight:bold;letter-spacing:0.465px;left:1711.55px;">Total Nombre de</div>
<div class="t" style="top:593px;font-size:13.5px;color:#333;font-weight:bold;letter-spacing:0.176px;left:1733.4px;">demandes</div>
<div class="a" style="left:1005px;top:611px;width:685px;height:2px;background:#cbcbcb"></div>
<div class="a" style="left:1109px;top:657px;width:581px;height:1px;background:#d0d0d0"></div>
<div class="a" style="left:1109px;top:682px;width:581px;height:1px;background:#d0d0d0"></div>
<div class="a" style="left:1109px;top:707px;width:581px;height:1px;background:#d0d0d0"></div>
<div class="a" style="left:1109px;top:731px;width:581px;height:2px;background:#c4c4c4"></div>
<div class="a" style="left:1005px;top:756px;width:685px;height:1px;background:#d0d0d0"></div>
<div class="a" style="left:1109px;top:802px;width:581px;height:1px;background:#d0d0d0"></div>
<div class="t" style="top:618px;font-size:13.5px;color:#1c1c1c;letter-spacing:0.172px;left:1012.49px;">Facebook</div>
<div class="t" style="top:618px;font-size:13.5px;color:#1c1c1c;letter-spacing:0.75px;left:1115.95px;">Informations</div>
<div class="t" style="top:618px;font-size:13.5px;color:#888;left:1203.4px;">/</div>
<div class="t" style="top:639px;font-size:13.5px;color:#1c1c1c;letter-spacing:0.257px;left:1116.51px;">Conseils</div>
<div class="t" style="top:628px;font-size:13.5px;color:#2a2a2a;right:560.40px;">0</div>
<div class="t" style="top:628px;font-size:13.5px;color:#2a2a2a;right:479.00px;">0</div>
<div class="t" style="top:628px;font-size:13.5px;color:#2a2a2a;right:409.00px;">2</div>
<div class="t" style="top:628px;font-size:13.5px;color:#2a2a2a;right:339.90px;">1</div>
<div class="t" style="top:628px;font-size:13.5px;color:#2a2a2a;right:274.60px;">1</div>
<div class="t" style="top:628px;font-size:13.5px;color:#2a2a2a;right:208.00px;">0</div>
<div class="t" style="top:628px;font-size:13.5px;color:#2a2a2a;font-weight:bold;right:52.70px;">4</div>
<div class="t" style="top:664px;font-size:13.5px;color:#1c1c1c;letter-spacing:0.195px;left:1116.09px;">Réseau magasins</div>
<div class="t" style="top:664px;font-size:13.5px;color:#2a2a2a;right:560.40px;">1</div>
<div class="t" style="top:664px;font-size:13.5px;color:#2a2a2a;right:479.00px;">0</div>
<div class="t" style="top:664px;font-size:13.5px;color:#2a2a2a;right:409.00px;">0</div>
<div class="t" style="top:664px;font-size:13.5px;color:#2a2a2a;right:339.90px;">0</div>
<div class="t" style="top:664px;font-size:13.5px;color:#2a2a2a;right:274.60px;">0</div>
<div class="t" style="top:664px;font-size:13.5px;color:#2a2a2a;right:208.00px;">0</div>
<div class="t" style="top:664px;font-size:13.5px;color:#2a2a2a;font-weight:bold;right:52.70px;">1</div>
<div class="t" style="top:688px;font-size:13.5px;color:#1c1c1c;letter-spacing:0.447px;left:1116.09px;">Réclamation Produit</div>
<div class="t" style="top:688px;font-size:13.5px;color:#2a2a2a;right:560.40px;">0</div>
<div class="t" style="top:688px;font-size:13.5px;color:#2a2a2a;right:479.00px;">1</div>
<div class="t" style="top:688px;font-size:13.5px;color:#2a2a2a;right:409.00px;">0</div>
<div class="t" style="top:688px;font-size:13.5px;color:#2a2a2a;right:339.90px;">0</div>
<div class="t" style="top:688px;font-size:13.5px;color:#2a2a2a;right:274.60px;">1</div>
<div class="t" style="top:688px;font-size:13.5px;color:#2a2a2a;right:208.00px;">0</div>
<div class="t" style="top:688px;font-size:13.5px;color:#2a2a2a;font-weight:bold;right:52.70px;">2</div>
<div class="t" style="top:713px;font-size:13.5px;color:#1c1c1c;letter-spacing:0.397px;left:1116.09px;">Remerciements</div>
<div class="t" style="top:713px;font-size:13.5px;color:#2a2a2a;right:560.40px;">0</div>
<div class="t" style="top:713px;font-size:13.5px;color:#2a2a2a;right:479.00px;">0</div>
<div class="t" style="top:713px;font-size:13.5px;color:#2a2a2a;right:409.00px;">1</div>
<div class="t" style="top:713px;font-size:13.5px;color:#2a2a2a;right:339.90px;">0</div>
<div class="t" style="top:713px;font-size:13.5px;color:#2a2a2a;right:274.60px;">0</div>
<div class="t" style="top:713px;font-size:13.5px;color:#2a2a2a;right:208.00px;">0</div>
<div class="t" style="top:713px;font-size:13.5px;color:#2a2a2a;font-weight:bold;right:52.70px;">1</div>
<div class="t" style="top:738px;font-size:13.5px;color:#1c1c1c;letter-spacing:0.382px;left:1116.51px;">Commande Web</div>
<div class="t" style="top:738px;font-size:13.5px;color:#2a2a2a;right:560.40px;">0</div>
<div class="t" style="top:738px;font-size:13.5px;color:#2a2a2a;right:479.00px;">0</div>
<div class="t" style="top:738px;font-size:13.5px;color:#2a2a2a;right:409.00px;">0</div>
<div class="t" style="top:738px;font-size:13.5px;color:#2a2a2a;right:339.90px;">1</div>
<div class="t" style="top:738px;font-size:13.5px;color:#2a2a2a;right:274.60px;">1</div>
<div class="t" style="top:738px;font-size:13.5px;color:#2a2a2a;right:208.00px;">0</div>
<div class="t" style="top:738px;font-size:13.5px;color:#2a2a2a;font-weight:bold;right:52.70px;">2</div>
<div class="t" style="top:763px;font-size:13.5px;color:#1c1c1c;letter-spacing:0.363px;left:1012.49px;">Email</div>
<div class="t" style="top:763px;font-size:13.5px;color:#1c1c1c;letter-spacing:0.75px;left:1115.95px;">Informations</div>
<div class="t" style="top:763px;font-size:13.5px;color:#888;left:1203.4px;">/</div>
<div class="t" style="top:784px;font-size:13.5px;color:#1c1c1c;letter-spacing:0.257px;left:1116.51px;">Conseils</div>
<div class="t" style="top:773px;font-size:13.5px;color:#2a2a2a;right:560.40px;">0</div>
<div class="t" style="top:773px;font-size:13.5px;color:#2a2a2a;right:479.00px;">0</div>
<div class="t" style="top:773px;font-size:13.5px;color:#2a2a2a;right:409.00px;">0</div>
<div class="t" style="top:773px;font-size:13.5px;color:#2a2a2a;right:339.90px;">1</div>
<div class="t" style="top:773px;font-size:13.5px;color:#2a2a2a;right:274.60px;">0</div>
<div class="t" style="top:773px;font-size:13.5px;color:#2a2a2a;right:208.00px;">0</div>
<div class="t" style="top:773px;font-size:13.5px;color:#2a2a2a;font-weight:bold;right:52.70px;">1</div>
<div class="t" style="top:808px;font-size:13.5px;color:#1c1c1c;letter-spacing:0.442px;left:1117.17px;">Alerte Médicale</div>
<div class="t" style="top:808px;font-size:13.5px;color:#2a2a2a;right:560.40px;">0</div>
<div class="t" style="top:808px;font-size:13.5px;color:#2a2a2a;right:479.00px;">0</div>
<div class="t" style="top:808px;font-size:13.5px;color:#2a2a2a;right:409.00px;">0</div>
<div class="t" style="top:808px;font-size:13.5px;color:#2a2a2a;right:339.90px;">0</div>
<div class="t" style="top:808px;font-size:13.5px;color:#2a2a2a;right:274.60px;">0</div>
<div class="t" style="top:808px;font-size:13.5px;color:#2a2a2a;right:208.00px;">1</div>
<div class="t" style="top:808px;font-size:13.5px;color:#2a2a2a;font-weight:bold;right:52.70px;">1</div>
<div id="frame"><i style="left:0;top:819px;width:1889px;height:1px;background:#fff"></i><i style="left:1888px;top:0;width:1px;height:820px;background:#fff"></i><i style="left:0;top:820px;width:1890px;height:1px;background:#8a8a8a"></i><i style="left:1889px;top:0;width:1px;height:821px;background:#686868"></i></div>
</body>
</html>
